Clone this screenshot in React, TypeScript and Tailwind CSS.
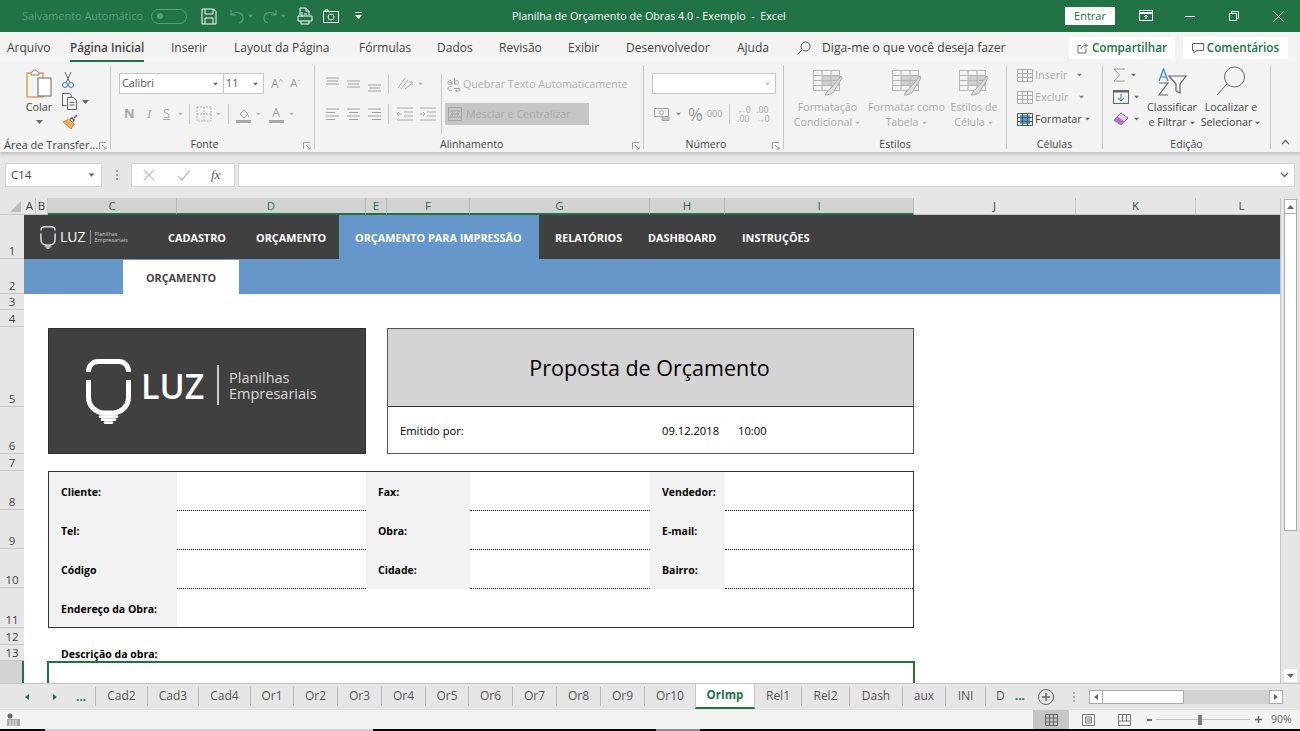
import React from "react";

function Caret({ c = "#666", cls = "" }: { c?: string; cls?: string }) {
  return (
    <svg width="7" height="4" viewBox="0 0 7 4" className={cls}>
      <path d="M0 0h7L3.500 4z" fill={c} />
    </svg>
  );
}

function Bulb({ w, h, sw }: { w: number; h: number; sw: number }) {
  return (
    <svg width={w} height={h} viewBox="0 0 45 65" fill="none" stroke="#fff" strokeWidth={sw}>
      <path d="M2.500 13V12C2.500 6.500 7 2.500 12 2.500H33C38 2.500 42.500 6.500 42.500 12V13" />
      <path d="M2.500 21V38C2.500 47 9 53 17 54H28C36 53 42.500 47 42.500 38V21" />
      <path d="M14 57.500H31M16 60.500H29M19 63.500H26" strokeWidth={sw * 0.55} strokeLinecap="round" />
    </svg>
  );
}

function Lines({ kind, c = "#a0a0a0" }: { kind: "l" | "c" | "r" | "t" | "m" | "b"; c?: string }) {
  const m: Record<string, string> = {
    l: "M2 3h13M2 6.500h9M2 10h13M2 13.500h9",
    c: "M2 3h13M4 6.500h9M2 10h13M4 13.500h9",
    r: "M2 3h13M6 6.500h9M2 10h13M6 13.500h9",
    t: "M2 2h13M3 5h11M2 8h13",
    m: "M2 5h13M3 8h11M2 11h13",
    b: "M2 9h13M3 12h11M2 15h13",
  };
  return (
    <svg width="17" height="17" viewBox="0 0 17 17" fill="none" stroke={c} strokeWidth="1">
      <path d={m[kind]} />
    </svg>
  );
}

function VSep({ cls = "h-[20px]" }: { cls?: string }) {
  return <div className={`w-px bg-[#c6c6c6] shrink-0 ${cls}`} />;
}

function Launcher() {
  return (
    <svg width="8" height="8" viewBox="0 0 8 8" fill="none" stroke="#9a9a9a" strokeWidth="1">
      <path d="M0.500 7V0.500H7M3 3l4 4M7 4.500V7H4.500" />
    </svg>
  );
}

function GroupLabel({ children, launcher, cls = "justify-center" }: { children: React.ReactNode; launcher?: boolean; cls?: string }) {
  return (
    <div className={`relative h-[16px] shrink-0 flex items-center text-[10.6px] text-[#444] whitespace-nowrap ${cls}`}>
      {children}
      {launcher && (
        <span className="absolute right-[3px] top-[5px]">
          <Launcher />
        </span>
      )}
    </div>
  );
}

function TableBrush({ fill = "#cfcfcf" }: { fill?: string }) {
  return (
    <svg width="30" height="27" viewBox="0 0 30 27" fill="none" stroke="#b4b4b4" strokeWidth="1">
      <rect x="0.500" y="0.500" width="26" height="20" fill="#f3f3f3" />
      <rect x="9" y="5" width="17" height="10" fill={fill} stroke="none" />
      <path d="M0.500 5.500h26M0.500 10.500h26M0.500 15.500h26M9 0.500v20M18 0.500v20" />
      <path d="M28 6L18 18c-2 1-4 4-6 7 4 0 8-1 9-4L29 8z" fill="#dcdcdc" stroke="#a8a8a8" />
    </svg>
  );
}

function TitleBar() {
  return (
    <div className="h-[32px] bg-[#217346] flex items-center text-white shrink-0 relative">
      <span className="ml-[22px] w-[129px] text-[10.9px] text-[#5f9d7f] whitespace-nowrap">Salvamento Automático</span>
      <div className="w-[36px] h-[15px] rounded-full border border-[#5f9d7f] flex items-center pl-[5px]">
        <div className="w-[6px] h-[6px] rounded-full bg-[#5f9d7f]" />
      </div>
      <svg className="ml-[14px]" width="16" height="17" viewBox="0 0 16 17" fill="none" stroke="#fff" strokeWidth="1">
        <path d="M1 1h11.500L15 3.500V16H1z" />
        <path d="M4 1v5h8V1M4 16v-6h8v6" />
      </svg>
      <svg className="ml-[12px]" width="16" height="16" viewBox="0 0 16 16" fill="none" stroke="#5f9d7f" strokeWidth="1.200">
        <path d="M2 2v5h5M2 7c4-4 11-3 12 2 .5 3-1 5-4 6" />
      </svg>
      <Caret c="#5f9d7f" cls="ml-[2px] scale-75" />
      <svg className="ml-[8px]" width="16" height="16" viewBox="0 0 16 16" fill="none" stroke="#5f9d7f" strokeWidth="1.200">
        <path d="M14 2v5H9M14 7C10 3 3 4 2 9c-.5 3 1 5 4 6" />
      </svg>
      <Caret c="#5f9d7f" cls="ml-[2px] scale-75" />
      <svg className="ml-[10px]" width="16" height="18" viewBox="0 0 16 18" fill="none" stroke="#fff" strokeWidth="1">
        <path d="M3 8V1h6l3 3v4M9 1v3h3M5 10V5M7 7h3" />
        <path d="M1 9h14v5H1zM4 14v3h8v-3" />
      </svg>
      <svg className="ml-[10px]" width="16" height="15" viewBox="0 0 16 15" fill="none" stroke="#fff" strokeWidth="1">
        <rect x="0.500" y="2.500" width="15" height="11" />
        <circle cx="8" cy="8" r="3" />
        <path d="M2 2V1h3v1" />
      </svg>
      <svg className="ml-[16px]" width="7" height="8" viewBox="0 0 7 8" fill="#fff">
        <path d="M0 0h7v1H0zM0 3h7L3.500 7z" />
      </svg>
      <span className="absolute left-[512px] text-[10.75px] whitespace-pre">Planilha de Orçamento de Obras 4.0 - Exemplo  -  Excel</span>
      <div className="ml-auto w-[50px] h-[18px] bg-white text-[#217346] text-[11px] flex items-center justify-center">Entrar</div>
      <svg className="ml-[24px]" width="14" height="12" viewBox="0 0 14 12" fill="none" stroke="#fff" strokeWidth="1">
        <rect x="0.500" y="0.500" width="13" height="10" />
        <path d="M0.500 3h13" strokeWidth="2" />
        <path d="M7 9V5M5 7l2-2 2 2" />
      </svg>
      <div className="ml-[32px] w-[10px] h-px bg-white" />
      <svg className="ml-[34px]" width="10" height="10" viewBox="0 0 10 10" fill="none" stroke="#fff" strokeWidth="1">
        <path d="M0.500 2.500h7v7h-7zM2.500 2.500v-2h7v7h-2" />
      </svg>
      <svg className="ml-[34px] mr-[16px]" width="11" height="11" viewBox="0 0 11 11" stroke="#fff" strokeWidth="1">
        <path d="M0.500 0.500l10 10M10.500 0.500l-10 10" />
      </svg>
    </div>
  );
}

function TabsRow() {
  const Item = ({ t, w, active }: { t: string; w: string; active?: boolean }) => (
    <div className={`${w} h-full flex items-center shrink-0`}>
      <span className={`relative whitespace-nowrap ${active ? "font-semibold text-[11.7px]" : ""}`}>
        {t}
        {active && <span className="absolute left-0 right-0 -bottom-[5px] h-[2px] bg-[#217346]" />}
      </span>
    </div>
  );
  return (
    <div className="h-[32px] bg-[#f3f3f3] flex items-center pl-[7px] text-[12px] text-[#444] shrink-0">
      <Item t="Arquivo" w="w-[63px]" />
      <Item t="Página Inicial" w="w-[101px]" active />
      <Item t="Inserir" w="w-[63px]" />
      <Item t="Layout da Página" w="w-[125px]" />
      <Item t="Fórmulas" w="w-[78px]" />
      <Item t="Dados" w="w-[62px]" />
      <Item t="Revisão" w="w-[69px]" />
      <Item t="Exibir" w="w-[58px]" />
      <Item t="Desenvolvedor" w="w-[111px]" />
      <Item t="Ajuda" w="w-[60px]" />
      <svg width="14" height="14" viewBox="0 0 14 14" fill="none" stroke="#555" strokeWidth="1">
        <circle cx="8.500" cy="5.500" r="4.500" />
        <path d="M5 9l-4.500 4.500" />
      </svg>
      <span className="ml-[11px] text-[12.2px] whitespace-nowrap">Diga-me o que você deseja fazer</span>
      <div className="ml-auto flex gap-[8px] pr-[12px]">
        <div className="w-[106px] h-[22px] bg-white flex items-center justify-center gap-[3px] text-[#217346] font-semibold text-[11.7px]">
          <svg width="12" height="12" viewBox="0 0 12 12" fill="none" stroke="#666" strokeWidth="1">
            <path d="M9 6.500V11H1V3.500h3M4 7c0-2.500 2-3.500 5-3.500M7.500 1.500L10.500 3.500 7.500 5.500" />
          </svg>
          Compartilhar
        </div>
        <div className="w-[105px] h-[22px] bg-white flex items-center justify-center gap-[3px] text-[#217346] font-semibold text-[11.7px]">
          <svg width="12" height="11" viewBox="0 0 12 11" fill="none" stroke="#666" strokeWidth="1">
            <path d="M0.500 0.500h11v7H4.500L2 10V7.500H0.500z" />
          </svg>
          Comentários
        </div>
      </div>
    </div>
  );
}

function Clipboard() {
  return (
    <div className="w-[111px] border-r border-[#c6c6c6] flex flex-col shrink-0 h-[84px] mt-[1px]">
      <div className="h-[72px] shrink-0 flex pt-[4px]">
        <div className="w-[62px] flex flex-col items-center pl-[16px]">
          <svg width="27" height="29" viewBox="0 0 27 29" fill="none">
            <path d="M1 4h16v24H1z" stroke="#d9a45f" strokeWidth="1.500" />
            <path d="M5 4c0-1 2-1 3-3h2c1 2 3 2 3 3v2H5z" fill="#f3f3f3" stroke="#888" />
            <rect x="12" y="9" width="13" height="18" fill="#fff" stroke="#666" />
          </svg>
          <span className="text-[10.8px] text-[#444] mt-[1px] leading-[16px]">Colar</span>
          <Caret cls="mt-[5px]" />
        </div>
        <div className="flex flex-col items-start gap-[4px] pt-[2px]">
          <svg width="12" height="18" viewBox="0 0 12 18" fill="none" stroke="#666" strokeWidth="1">
            <path d="M3 1l5 11M9 1L4 12" />
            <circle cx="3" cy="14" r="2.500" stroke="#3a7bbf" />
            <circle cx="9" cy="14" r="2.500" stroke="#3a7bbf" />
          </svg>
          <div className="flex items-center gap-[4px]">
            <svg width="16" height="17" viewBox="0 0 16 17" fill="none" stroke="#666" strokeWidth="1">
              <path d="M0.500 0.500h7l2 2v2M4.500 12.500h-4v-12" />
              <path d="M5.500 4.500h6l3 3v9h-9z" />
              <path d="M7.500 9.500h5M7.500 12h5" />
            </svg>
            <Caret />
          </div>
          <svg width="16" height="16" viewBox="0 0 16 16" fill="none">
            <path d="M1 8l6-3 5 5-3 5z" fill="#e9b163" stroke="#c98c36" />
            <path d="M8 5l2-1 2 2-1 2M12 4l3-3" stroke="#666" strokeWidth="1.500" />
          </svg>
        </div>
      </div>
      <GroupLabel launcher cls="justify-start pl-[4px]">
        <span className="text-[11px]">Área de Transfer...</span>
      </GroupLabel>
    </div>
  );
}

function Fonte() {
  return (
    <div className="w-[204px] border-r border-[#c6c6c6] flex flex-col shrink-0 h-[84px] mt-[1px]">
      <div className="h-[72px] shrink-0 pl-[8px]">
        <div className="flex items-center mt-[8px] h-[21px]">
          <div className="w-[105px] h-[21px] bg-white border border-[#c6c6c6] flex items-center justify-between pl-[2px] pr-[4px] text-[10.8px] text-[#555]">
            Calibri
            <Caret cls="scale-75" />
          </div>
          <div className="w-[41px] h-[21px] bg-white border border-[#c6c6c6] -ml-px flex items-center justify-between pl-[2px] pr-[4px] text-[10.8px] text-[#555]">
            11
            <Caret cls="scale-75" />
          </div>
          <span className="ml-[7px] text-[12px] text-[#999]">A</span>
          <span className="text-[8px] text-[#999] mb-[5px]">^</span>
          <span className="ml-[7px] text-[11px] text-[#999]">A</span>
          <span className="text-[8px] text-[#999] mb-[4px]">ˇ</span>
        </div>
        <div className="flex items-center mt-[9px] h-[22px] text-[13px] text-[#a8a8a8]">
          <span className="w-[21px] pl-[5px] font-bold">N</span>
          <span className="w-[20px] pl-[7px] italic" style={{ fontFamily: "Liberation Serif, serif" }}>I</span>
          <span className="w-[17px] pl-[3px] underline">S</span>
          <Caret c="#bbb" cls="scale-75" />
          <VSep cls="h-[20px] ml-[5px]" />
          <svg className="ml-[6px]" width="16" height="16" viewBox="0 0 16 16" fill="none" stroke="#b4b4b4" strokeWidth="1" strokeDasharray="2 1">
            <path d="M1 1h14v14H1zM8 1v14M1 8h14" />
          </svg>
          <Caret c="#bbb" cls="ml-[3px] scale-75" />
          <VSep cls="h-[20px] ml-[6px]" />
          <svg className="ml-[6px]" width="17" height="17" viewBox="0 0 17 17" fill="none">
            <path d="M5 8l4-4 4 4-4 4z" stroke="#999" />
            <path d="M13 9c1 1 1 2 0 2" stroke="#999" />
            <rect x="1" y="14" width="15" height="3" fill="#a8a8a8" />
          </svg>
          <Caret c="#bbb" cls="ml-[3px] scale-75" />
          <div className="ml-[6px] w-[16px] flex flex-col items-center leading-[14px] text-[12px] text-[#999]">
            A
            <div className="w-[15px] h-[3px] bg-[#a8a8a8]" />
          </div>
          <Caret c="#bbb" cls="ml-[4px] scale-75" />
        </div>
      </div>
      <GroupLabel launcher cls="justify-center pr-[16px]">Fonte</GroupLabel>
    </div>
  );
}

function Alinhamento() {
  return (
    <div className="w-[329px] border-r border-[#c6c6c6] flex flex-col shrink-0 h-[84px] mt-[1px]">
      <div className="h-[72px] shrink-0 flex pl-[9px]">
        <div className="flex flex-col w-[116px] shrink-0">
          <div className="flex items-center mt-[9px] h-[20px] gap-[4px]">
            <Lines kind="t" />
            <Lines kind="m" />
            <Lines kind="b" />
            <VSep cls="h-[20px] ml-[1px]" />
            <svg className="ml-[3px]" width="18" height="16" viewBox="0 0 18 16" fill="none" stroke="#a8a8a8" strokeWidth="1">
              <path d="M2 12L9 2M5 13l7-9M9 13l6-5M13 6h3v3" />
            </svg>
            <Caret c="#bbb" cls="scale-75 -ml-[1px]" />
          </div>
          <div className="flex items-center mt-[10px] h-[20px] gap-[4px]">
            <Lines kind="l" />
            <Lines kind="c" />
            <Lines kind="r" />
            <VSep cls="h-[20px] ml-[1px]" />
            <svg className="ml-[3px]" width="18" height="15" viewBox="0 0 18 15" fill="none" stroke="#a8a8a8" strokeWidth="1">
              <path d="M1 1h16M8 5h9M8 9h9M1 13h16M6 7H1M3 5L1 7l2 2" />
            </svg>
            <svg className="ml-[1px]" width="18" height="15" viewBox="0 0 18 15" fill="none" stroke="#a8a8a8" strokeWidth="1">
              <path d="M1 1h16M8 5h9M8 9h9M1 13h16M1 7h5M4 5l2 2-2 2" />
            </svg>
          </div>
        </div>
        <VSep cls="h-[60px] mt-[9px] ml-[1px]" />
        <div className="flex flex-col pl-[3px]">
          <div className="flex items-center mt-[9px] h-[20px] text-[10.7px] text-[#b0b0b0] whitespace-nowrap">
            <svg className="ml-[1px] mr-[2px]" width="15" height="15" viewBox="0 0 15 15" fill="none" stroke="#a3a3a3" strokeWidth="1">
              <path d="M2 5.500c0-3 4-3 4 0v2M6 6c-1-1-4-.5-4 .5s3 1.500 4 0M8.500 0.500v7M8.500 5c1-2 4-1.500 4 .5s-3 2.500-4 .5M6 10c-1-1-4-1-4 1.500S5 14 6 13M8 11.500h5c1.500 0 1.500 2.500 0 2.500h-3M11 12.500L9.500 14l1.500 1" />
            </svg>
            Quebrar Texto Automaticamente
          </div>
          <div className="flex items-center mt-[9px] w-[144px] h-[22px] bg-[#c6c6c6] text-[10.7px] text-[#a9a9a9] whitespace-nowrap">
            <svg className="ml-[3px] mr-[4px]" width="14" height="14" viewBox="0 0 14 14" fill="none" stroke="#a3a3a3" strokeWidth="1">
              <path d="M0.500 0.500h13v13h-13zM0.500 4h13M0.500 10h13M3 7h8M5 5L3 7l2 2M9 5l2 2-2 2" />
            </svg>
            Mesclar e Centralizar
          </div>
        </div>
      </div>
      <GroupLabel launcher cls="justify-start pl-[125px]">Alinhamento</GroupLabel>
    </div>
  );
}

function Numero() {
  return (
    <div className="w-[140px] border-r border-[#c6c6c6] flex flex-col shrink-0 h-[84px] mt-[1px]">
      <div className="h-[72px] shrink-0 pl-[8px]">
        <div className="w-[124px] h-[21px] mt-[8px] bg-white border border-[#c6c6c6] flex items-center justify-end pr-[4px]">
          <Caret c="#bbb" cls="scale-75" />
        </div>
        <div className="flex items-center mt-[9px] h-[22px] text-[#a0a0a0]">
          <svg className="ml-[2px]" width="16" height="14" viewBox="0 0 16 14" fill="none" stroke="#a0a0a0" strokeWidth="1">
            <path d="M0.500 1.500h14v8h-14zM8 12h7M8 10h7v3.500H8z" />
            <circle cx="7.500" cy="5.500" r="2" />
          </svg>
          <Caret cls="ml-[5px] scale-75" c="#888" />
          <span className="ml-[6px] text-[18px] leading-none text-[#999]">%</span>
          <span className="ml-[4px] text-[9px]">000</span>
          <VSep cls="h-[20px] ml-[7px]" />
          <div className="ml-[7px] w-[17px] text-[8.5px] leading-[9px]">
            <div>←0</div>
            <div>.00</div>
          </div>
          <div className="ml-[2px] w-[17px] text-[8.5px] leading-[9px]">
            <div>.00</div>
            <div>→0</div>
          </div>
        </div>
      </div>
      <GroupLabel launcher cls="justify-center pr-[15px]">Número</GroupLabel>
    </div>
  );
}

function Estilos() {
  const St = ({ w, a, b }: { w: string; a: string; b: string }) => (
    <div className={`${w} flex flex-col items-center shrink-0`}>
      <TableBrush />
      <span className="text-[10.7px] leading-[15px] text-[#a8a8a8] whitespace-nowrap mt-[3px]">{a}</span>
      <span className="text-[10.7px] leading-[15px] text-[#a8a8a8] whitespace-nowrap flex items-center gap-[2px]">
        {b}
        <Caret c="#bbb" cls="scale-75" />
      </span>
    </div>
  );
  return (
    <div className="w-[223px] border-r border-[#c6c6c6] flex flex-col shrink-0 h-[84px] mt-[1px]">
      <div className="h-[72px] shrink-0 flex pt-[5px] pl-[5px]">
        <St w="w-[77px]" a="Formatação" b="Condicional" />
        <St w="w-[81px]" a="Formatar como" b="Tabela" />
        <St w="w-[54px]" a="Estilos de" b="Célula" />
      </div>
      <GroupLabel>Estilos</GroupLabel>
    </div>
  );
}

function Celulas() {
  const Row = ({ t, c, stroke, blue, caretCls }: { t: string; c: string; stroke: string; blue?: boolean; caretCls: string }) => (
    <div className={`flex items-center h-[22px] text-[10.8px] ${c}`}>
      <svg width="16" height="15" viewBox="0 0 16 15" fill="none" stroke={stroke} strokeWidth="1" className="mr-[2px]">
        {blue && <rect x="3" y="3" width="10" height="9" fill="#4a9be0" stroke="none" />}
        <path d="M0.500 1.500h15v12h-15zM0.500 5.500h15M0.500 9.500h15M5.500 1.500v12M10.500 1.500v12" />
      </svg>
      {t}
      <Caret c={blue ? "#666" : "#777"} cls={`scale-75 ${caretCls}`} />
    </div>
  );
  return (
    <div className="w-[96px] border-r border-[#c6c6c6] flex flex-col shrink-0 h-[84px] mt-[1px]">
      <div className="h-[72px] shrink-0 pl-[10px]">
        <div className="-mt-[1px]">
          <Row t="Inserir" c="text-[#a8a8a8]" stroke="#aaa" caretCls="ml-[9px]" />
          <Row t="Excluir" c="text-[#a8a8a8]" stroke="#aaa" caretCls="ml-[10px]" />
          <Row t="Formatar" c="text-[#444]" stroke="#555" blue caretCls="ml-[2px]" />
        </div>
      </div>
      <GroupLabel>Células</GroupLabel>
    </div>
  );
}

function Edicao() {
  return (
    <div className="w-[168px] border-r border-[#c6c6c6] flex flex-col shrink-0 h-[84px] mt-[1px]">
      <div className="h-[72px] shrink-0 flex">
        <div className="w-[41px] pl-[10px] shrink-0 -mt-[1px]">
          <div className="h-[22px] flex items-center gap-[4px]">
            <svg width="13" height="14" viewBox="0 0 13 14" fill="none" stroke="#999" strokeWidth="1">
              <path d="M12 1H1l5.500 6L1 13h11" />
            </svg>
            <Caret cls="scale-75" />
          </div>
          <div className="h-[22px] flex items-center gap-[4px]">
            <svg width="16" height="14" viewBox="0 0 16 14" fill="none" stroke="#666" strokeWidth="1">
              <rect x="0.500" y="0.500" width="15" height="13" />
              <path d="M0.500 1.500h15" strokeWidth="2" />
              <path d="M8 4v7M5 8l3 3 3-3" stroke="#2f7fd0" />
            </svg>
            <Caret cls="scale-75" />
          </div>
          <div className="h-[22px] flex items-center gap-[4px]">
            <svg width="16" height="14" viewBox="0 0 16 14">
              <path d="M1 8l7-7 7 5-7 7z" fill="#e9d4ef" stroke="#9c5bb0" />
              <path d="M1 8l3.500-3.500 7 5L8 13z" fill="#b070c4" />
            </svg>
            <Caret cls="scale-75" />
          </div>
        </div>
        <div className="w-[56px] flex flex-col items-center shrink-0">
          <svg className="mt-[3px]" width="29" height="28" viewBox="0 0 29 28" fill="none">
            <path d="M1 13L5.500 1 10 13M2.500 9h6" stroke="#2e8ad8" strokeWidth="1.200" />
            <path d="M1 15h9L1 27h9" stroke="#666" strokeWidth="1.200" />
            <path d="M11 8h17l-6 8v9l-4-2v-7z" stroke="#666" strokeWidth="1.200" />
          </svg>
          <span className="text-[10.7px] leading-[15px] text-[#444] mt-[4px] whitespace-nowrap">Classificar</span>
          <span className="text-[10.7px] leading-[15px] text-[#444] whitespace-nowrap flex items-center gap-[2px]">
            e Filtrar
            <Caret cls="scale-75" />
          </span>
        </div>
        <div className="w-[60px] flex flex-col items-center shrink-0 ml-[1px]">
          <svg width="30" height="30" viewBox="0 0 30 30" fill="none" stroke="#666" strokeWidth="1" className="mt-[1px]">
            <circle cx="18.500" cy="11" r="10" />
            <path d="M11 18L1 29" />
          </svg>
          <span className="text-[10.7px] leading-[15px] text-[#444] mt-[4px] whitespace-nowrap">Localizar e</span>
          <span className="text-[10.7px] leading-[15px] text-[#444] whitespace-nowrap flex items-center gap-[2px]">
            Selecionar
            <Caret cls="scale-75" />
          </span>
        </div>
      </div>
      <GroupLabel>Edição</GroupLabel>
    </div>
  );
}

function Ribbon() {
  return (
    <div className="h-[88px] bg-[#f3f3f3] flex shadow-[0_2px_3px_rgba(0,0,0,0.18)] relative shrink-0 z-10">
      <Clipboard />
      <Fonte />
      <Alinhamento />
      <Numero />
      <Estilos />
      <Celulas />
      <Edicao />
      <div className="flex-1 flex items-end justify-center pb-[7px]">
        <svg width="9" height="6" viewBox="0 0 9 6" fill="none" stroke="#666" strokeWidth="1.300">
          <path d="M1 5l3.500-3.500L8 5" />
        </svg>
      </div>
    </div>
  );
}

function FormulaBar() {
  return (
    <div className="h-[46px] bg-[#e6e6e6] flex items-start pt-[11px] shrink-0 pl-[5px] pr-[5px]">
      <div className="w-[97px] h-[24px] bg-white border border-[#d4d4d4] flex items-center justify-between pl-[5px] pr-[6px] text-[11.5px] text-[#444]">
        C14
        <Caret cls="scale-90" />
      </div>
      <div className="w-[29px] h-[24px] flex flex-col items-center justify-center gap-[2px]">
        <span className="w-[2px] h-[2px] bg-[#999]" />
        <span className="w-[2px] h-[2px] bg-[#999]" />
        <span className="w-[2px] h-[2px] bg-[#999]" />
      </div>
      <div className="w-[104px] h-[24px] bg-white border border-[#d4d4d4] flex items-center">
        <svg className="ml-[11px]" width="13" height="12" viewBox="0 0 13 12" fill="none" stroke="#c2c2c2" strokeWidth="1.300">
          <path d="M1 1l10 10M11 1L1 11" />
        </svg>
        <svg className="ml-[21px]" width="14" height="12" viewBox="0 0 14 12" fill="none" stroke="#c2c2c2" strokeWidth="1.300">
          <path d="M1 7l4 4 8-10" />
        </svg>
        <span className="ml-[20px] text-[13px] italic text-[#555]" style={{ fontFamily: "Liberation Serif, serif" }}>
          fx
        </span>
      </div>
      <div className="ml-[3px] flex-1 h-[24px] bg-white border border-[#d4d4d4] flex items-center justify-end pr-[5px]">
        <svg width="9" height="6" viewBox="0 0 9 6" fill="none" stroke="#666" strokeWidth="1.300">
          <path d="M1 1l3.500 3.500L8 1" />
        </svg>
      </div>
    </div>
  );
}

function ColHeaders() {
  const Col = ({ t, w, on }: { t: string; w: string; on?: boolean }) => (
    <div
      className={`${w} h-full flex items-center justify-center shrink-0 text-[11.5px] border-r ${
        on ? "bg-[#d2d2d2] text-[#217346] border-[#b8b8b8] border-b-2 border-b-[#217346]" : "bg-[#e6e6e6] text-[#444] border-[#c6c6c6] border-b border-b-[#c6c6c6]"
      }`}
    >
      {t}
    </div>
  );
  return (
    <div className="h-[17px] flex bg-[#e6e6e6] shrink-0">
      <div className="w-[24px] h-full flex items-end justify-end pr-[3px] pb-[2px] border-b border-[#c6c6c6] shrink-0">
        <div className="w-0 h-0 border-l-[11px] border-l-transparent border-b-[11px] border-b-[#bdbdbd]" />
      </div>
      <Col t="A" w="w-[12px]" />
      <Col t="B" w="w-[12px]" />
      <Col t="C" w="w-[129px]" on />
      <Col t="D" w="w-[189px]" on />
      <Col t="E" w="w-[21px]" on />
      <Col t="F" w="w-[83px]" on />
      <Col t="G" w="w-[180px]" on />
      <Col t="H" w="w-[75px]" on />
      <Col t="I" w="w-[189px]" on />
      <Col t="J" w="w-[162px]" />
      <Col t="K" w="w-[120px]" />
      <Col t="L" w="w-[92px]" />
    </div>
  );
}

function RowHeaders() {
  const R = ({ t, h }: { t: string; h: string }) => (
    <div className={`${h} flex items-end justify-center border-b border-[#c6c6c6] text-[11.5px] leading-[15px] text-[#444] shrink-0`}>{t}</div>
  );
  return (
    <div className="w-[24px] bg-[#e6e6e6] flex flex-col shrink-0">
      <R t="1" h="h-[44px]" />
      <R t="2" h="h-[35px]" />
      <R t="3" h="h-[16px]" />
      <R t="4" h="h-[17px]" />
      <R t="5" h="h-[80px]" />
      <R t="6" h="h-[47px]" />
      <R t="7" h="h-[17px]" />
      <R t="8" h="h-[39px]" />
      <R t="9" h="h-[39px]" />
      <R t="10" h="h-[39px]" />
      <R t="11" h="h-[40px]" />
      <R t="12" h="h-[17px]" />
      <R t="13" h="h-[16px]" />
      <div className="h-[22px] bg-[#d2d2d2] border-r-2 border-[#217346]" />
    </div>
  );
}

function NavBar() {
  const N = ({ t, w }: { t: string; w: string }) => (
    <div className={`${w} h-full flex items-center pt-[2px] font-bold shrink-0 whitespace-nowrap`}>{t}</div>
  );
  return (
    <div className="h-[44px] bg-[#404040] flex items-center text-white text-[10.85px] shrink-0">
      <div className="w-[144px] flex items-center pl-[16px] shrink-0">
        <Bulb w={16} h={23} sw={3.500} />
        <span className="ml-[4px] text-[14px] font-medium leading-none">LUZ</span>
        <span className="ml-[4px] w-px h-[14px] bg-[#999]" />
        <span className="ml-[4px] text-[5.5px] leading-[6px] text-[#ccc]">
          Planilhas
          <br />
          Empresariais
        </span>
      </div>
      <N t="CADASTRO" w="w-[88px]" />
      <N t="ORÇAMENTO" w="w-[83px]" />
      <div className="w-[200px] h-full bg-[#6597cb] flex items-center pl-[16px] pt-[2px] font-bold shrink-0 whitespace-nowrap">ORÇAMENTO PARA IMPRESSÃO</div>
      <div className="w-[16px] shrink-0" />
      <N t="RELATÓRIOS" w="w-[93px]" />
      <N t="DASHBOARD" w="w-[94px]" />
      <N t="INSTRUÇÕES" w="w-[80px]" />
    </div>
  );
}

function Field({ l, last }: { l: string; last?: boolean }) {
  return (
    <>
      <div className="bg-[#f2f2f2] flex items-center pl-[12px] pt-[3px] font-bold text-[10.5px] text-black whitespace-nowrap">{l}</div>
      {!last && <div className="border-b border-dotted border-black" />}
    </>
  );
}

function SheetBody() {
  return (
    <div className="flex-1 min-w-0 bg-white flex flex-col overflow-hidden">
      <NavBar />
      <div className="h-[35px] bg-[#6597cb] pl-[99px] shrink-0 pt-px">
        <div className="w-[116px] h-[34px] bg-white flex items-center justify-center text-[10.85px] font-bold text-[#444] pt-[3px]">ORÇAMENTO</div>
      </div>
      <div className="h-[34px] shrink-0" />
      <div className="flex pl-[24px] h-[126px] shrink-0">
        <div className="w-[318px] bg-[#404040] border border-[#2e2e2e] flex items-center pl-[37px] shrink-0">
          <Bulb w={45} h={65} sw={5} />
          <span className="ml-[10px] w-[66px] text-[34px] font-semibold leading-none text-white whitespace-nowrap -mt-[11px]">LUZ</span>
          <span className="ml-[10px] w-[2px] h-[40px] bg-[#c8c8c8] -mt-[12px] shrink-0" />
          <div className="ml-[10px] text-[14.5px] leading-[16px] text-[#dcdcdc] -mt-[10px] whitespace-nowrap">
            <div>Planilhas</div>
            <div>Empresariais</div>
          </div>
        </div>
        <div className="ml-[21px] w-[527px] border border-[#555] flex flex-col shrink-0">
          <div className="h-[78px] bg-[#d4d4d4] border-b border-[#333] flex items-center justify-center pt-[2px] pr-[2px] text-[21.5px] text-black">Proposta de Orçamento</div>
          <div className="flex-1 flex items-center text-[11.2px] text-black pl-[12px] pt-[2px]">
            <span className="w-[262px]">Emitido por:</span>
            <span className="w-[76px]">09.12.2018</span>
            <span>10:00</span>
          </div>
        </div>
      </div>
      <div className="h-[17px] shrink-0" />
      <div className="ml-[24px] w-[866px] h-[157px] border border-[#333] grid grid-cols-[128px_189px_104px_180px_75px_188px] grid-rows-[39px_39px_39px_38px] shrink-0">
        <Field l="Cliente:" />
        <Field l="Fax:" />
        <Field l="Vendedor:" />
        <Field l="Tel:" />
        <Field l="Obra:" />
        <Field l="E-mail:" />
        <Field l="Código" />
        <Field l="Cidade:" />
        <Field l="Bairro:" />
        <Field l="Endereço da Obra:" last />
        <div className="col-span-5" />
      </div>
      <div className="h-[17px] shrink-0" />
      <div className="h-[16px] pl-[37px] pt-[3px] flex items-center font-bold text-[10.5px] text-black shrink-0 whitespace-nowrap">Descrição da obra:</div>
      <div className="ml-[23px] w-[868px] h-[22px] border-2 border-b-0 border-[#217346] shrink-0" />
    </div>
  );
}

function VScroll() {
  return (
    <div className="w-[20px] bg-[#e6e6e6] flex flex-col pl-[3px] pr-[3px] -mt-[17px] shrink-0 relative border-l border-[#c6c6c6]">
      <div className="h-[15px] mt-px bg-white border border-[#ababab] flex items-center justify-center shrink-0">
        <svg width="7" height="4" viewBox="0 0 7 4">
          <path d="M0 4h7L3.500 0z" fill="#666" />
        </svg>
      </div>
      <div className="h-[317px] bg-white border border-[#ababab] border-t-0 shrink-0" />
      <div className="flex-1" />
      <div className="h-[13px] bg-white flex items-center justify-center shrink-0 mb-[1px]">
        <Caret />
      </div>
    </div>
  );
}

function SheetTabs() {
  const T = ({ t, w, sep = true }: { t: string; w: string; sep?: boolean }) => (
    <div className={`${w} h-[19px] flex items-center justify-center pb-[2px] shrink-0 ${sep ? "border-r border-[#b8b8b8]" : ""}`}>{t}</div>
  );
  return (
    <div className="h-[26px] bg-[#e6e6e6] border-t border-[#c6c6c6] flex items-center text-[12px] text-[#555] shrink-0">
      <div className="w-[96px] h-[19px] flex items-center border-r border-[#b8b8b8] shrink-0 text-[#217346]">
        <svg className="ml-[25px]" width="4" height="6" viewBox="0 0 4 6">
          <path d="M4 0v6L0 3z" fill="#217346" />
        </svg>
        <svg className="ml-[24px]" width="4" height="6" viewBox="0 0 4 6">
          <path d="M0 0v6l4-3z" fill="#217346" />
        </svg>
        <span className="ml-[19px] font-bold leading-none">...</span>
      </div>
      <T t="Cad2" w="w-[52px]" />
      <T t="Cad3" w="w-[51px]" />
      <T t="Cad4" w="w-[52px]" />
      <T t="Or1" w="w-[43px]" />
      <T t="Or2" w="w-[44px]" />
      <T t="Or3" w="w-[44px]" />
      <T t="Or4" w="w-[44px]" />
      <T t="Or5" w="w-[43px]" />
      <T t="Or6" w="w-[44px]" />
      <T t="Or7" w="w-[44px]" />
      <T t="Or8" w="w-[44px]" />
      <T t="Or9" w="w-[44px]" />
      <T t="Or10" w="w-[50px]" sep={false} />
      <div className="w-[60px] h-[25px] -mt-px bg-white border-x border-[#c6c6c6] border-b-2 border-b-[#217346] flex items-center justify-center font-bold text-[11.5px] text-[#217346] shrink-0">OrImp</div>
      <T t="Rel1" w="w-[47px]" />
      <T t="Rel2" w="w-[48px]" />
      <T t="Dash" w="w-[53px]" />
      <T t="aux" w="w-[43px]" />
      <T t="INI" w="w-[40px]" />
      <div className="w-[44px] flex items-center pl-[10px] pb-[2px] shrink-0">
        D<span className="ml-[10px] font-bold text-[#217346] leading-none">...</span>
      </div>
      <svg className="ml-[8px]" width="16" height="16" viewBox="0 0 16 16" fill="none" stroke="#666" strokeWidth="1">
        <circle cx="8" cy="8" r="7.500" />
        <path d="M8 4v8M4 8h8" strokeWidth="1.500" />
      </svg>
      <div className="ml-[19px] flex flex-col gap-[2px]">
        <span className="w-[2px] h-[2px] bg-[#aaa]" />
        <span className="w-[2px] h-[2px] bg-[#aaa]" />
        <span className="w-[2px] h-[2px] bg-[#aaa]" />
      </div>
      <div className="ml-[14px] w-[194px] h-[14px] flex items-center bg-[#d2d2d2] shrink-0">
        <div className="w-[14px] h-full bg-white border border-[#ababab] flex items-center justify-center">
          <svg width="4" height="6" viewBox="0 0 4 6">
            <path d="M4 0v6L0 3z" fill="#666" />
          </svg>
        </div>
        <div className="w-[81px] h-full bg-white border-y border-r border-[#ababab]" />
        <div className="flex-1" />
        <div className="w-[14px] h-full bg-white border border-[#ababab] flex items-center justify-center">
          <svg width="4" height="6" viewBox="0 0 4 6">
            <path d="M0 0v6l4-3z" fill="#666" />
          </svg>
        </div>
      </div>
    </div>
  );
}

function StatusBar() {
  return (
    <div className="h-[20px] bg-[#f3f3f3] border-t border-[#e0e0e0] flex items-center shrink-0 text-[#666]">
      <svg className="ml-[7px]" width="13" height="13" viewBox="0 0 13 13">
        <circle cx="3" cy="3" r="2.500" fill="#666" />
        <rect x="0" y="6" width="13" height="7" fill="#a9a9a9" />
        <path d="M3 7v6M6 7v6M9 7v6" stroke="#eee" />
      </svg>
      <div className="ml-[1013px] w-[36px] h-full bg-[#c6c6c6] flex items-center justify-center shrink-0">
        <svg width="13" height="12" viewBox="0 0 13 12" fill="none" stroke="#666" strokeWidth="1">
          <path d="M0.500 0.500h12v11h-12zM0.500 4h12M0.500 8h12M4.500 0.500v11M8.500 0.500v11" />
        </svg>
      </div>
      <svg className="ml-[13px]" width="13" height="12" viewBox="0 0 13 12" fill="none" stroke="#777" strokeWidth="1">
        <path d="M0.500 0.500h12v11h-12zM3.500 3h6v6h-6zM4.500 5h4M4.500 7h4" />
      </svg>
      <svg className="ml-[23px]" width="13" height="12" viewBox="0 0 13 12" fill="none" stroke="#777" strokeWidth="1">
        <path d="M0.500 0.500h12v11h-12zM0.500 7h12M4.500 0.500v6.500M8.500 0.500v6.500" />
      </svg>
      <div className="ml-[16px] w-[5px] h-[2px] bg-[#666]" />
      <div className="ml-[4px] w-[94px] h-px bg-[#c0c0c0] flex items-center pl-[42px]">
        <div className="w-[4px] h-[10px] bg-[#7a7a7a]" />
      </div>
      <svg className="ml-[5px]" width="7" height="7" viewBox="0 0 7 7" stroke="#666" strokeWidth="1.500">
        <path d="M3.500 0v7M0 3.500h7" />
      </svg>
      <span className="ml-[9px] text-[10.5px]">90%</span>
    </div>
  );
}

export default function App() {
  return (
    <div className="w-[1300px] h-[731px] overflow-hidden flex flex-col bg-[#e6e6e6]" style={{ fontFamily: '"Open Sans", "Noto Sans", sans-serif' }}>
      <TitleBar />
      <TabsRow />
      <Ribbon />
      <FormulaBar />
      <ColHeaders />
      <div className="h-[468px] flex shrink-0">
        <RowHeaders />
        <SheetBody />
        <VScroll />
      </div>
      <SheetTabs />
      <StatusBar />
      <div className="h-[2px] flex shrink-0">
        <div className="w-[45px] bg-black" />
        <div className="w-[328px] bg-[#d0d0d0]" />
        <div className="w-[283px] bg-black" />
        <div className="w-[44px] bg-[#888]" />
        <div className="flex-1 bg-black" />
      </div>
    </div>
  );
}
